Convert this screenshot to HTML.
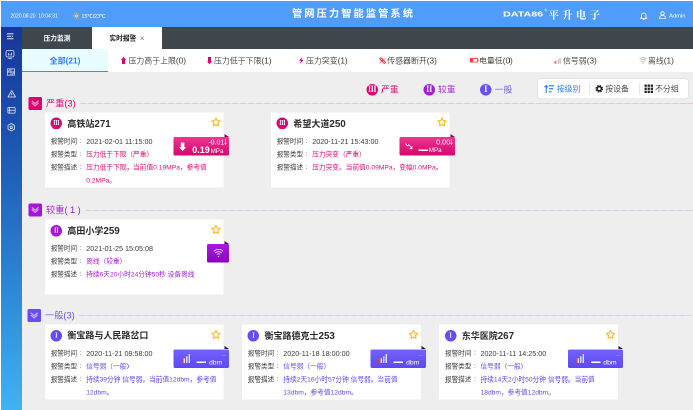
<!DOCTYPE html>
<html lang="zh-CN">
<head>
<meta charset="utf-8">
<title>管网压力智能监管系统</title>
<style>
*{box-sizing:border-box;margin:0;padding:0}
html,body{width:693px;height:410px;overflow:hidden;background:#fff}
body{font-family:"Liberation Sans","Noto Sans CJK SC",sans-serif;color:#333}
#app{position:absolute;left:1px;top:1px;width:1384px;height:818px;transform:scale(.5);transform-origin:0 0;background:#eee;overflow:hidden;will-change:transform}
.abs{position:absolute}
/* header */
#hdr{position:absolute;left:0;top:0;width:1384px;height:51.600px;background:#509cfb;color:#fff}
#hdr .dt{position:absolute;left:19px;top:23px;font-size:10px;line-height:14px;white-space:nowrap}
#hdr .wt{position:absolute;left:161px;font-weight:500;top:23px;font-size:10.600px;line-height:14px;white-space:nowrap}
#hdr .sun{position:absolute;left:143.500px;top:22.500px;width:13.500px;height:13.500px}
#hdr h1{position:absolute;left:582px;top:9px;white-space:nowrap;font-size:20.500px;line-height:32px;font-weight:700;letter-spacing:4.100px}
#hdr .db{position:absolute;left:1004px;top:16px;font-family:"Liberation Sans",sans-serif;font-weight:700;font-size:14.600px;line-height:20px;transform:scaleX(1.47);transform-origin:0 50%;white-space:nowrap}
#hdr .reg{position:absolute;left:1087px;top:15px;font-size:7px;line-height:8px}
#hdr .ps{position:absolute;left:1095px;top:12px;font-family:"Noto Serif CJK SC","Liberation Serif",serif;font-weight:700;font-size:21px;line-height:28px;letter-spacing:6.400px;white-space:nowrap}
#hdr .bell{position:absolute;left:1277.500px;top:20.500px;width:15px;height:17px}
#hdr .usr{position:absolute;left:1316px;top:19.500px;width:14px;height:16.500px}
#hdr .adm{position:absolute;left:1336px;top:22px;font-size:11.600px;line-height:14px}
/* sidebar */
#side{position:absolute;left:0;top:51px;width:42px;height:767px;background:linear-gradient(180deg,#18359c 0%,#1d50ae 27%,#2a80d0 63%,#40b2f2 100%)}
#side svg{position:absolute;opacity:.9}
/* tabs */
#tabs{position:absolute;left:42px;top:51px;width:1342px;height:45px;z-index:0;background:#3f464c}
#tabs .t{position:absolute;top:0;height:45px;line-height:48px;font-size:13.400px;color:#fff;text-align:center;font-weight:700}
#tabs .t.a{background:#fff;color:#222}
#tabs .x{font-weight:400;color:#777;font-size:17px;margin-left:7px;vertical-align:-1px}
#sub{position:absolute;left:42px;top:96px;width:1342px;height:46px;background:#fff;white-space:nowrap}
#sub .s{position:absolute;top:0;height:46px;line-height:46px;font-size:15.800px;color:#3a3a3a;font-weight:350}
#sub .s.a{background:#e9fcff;color:#2f7dfb;font-weight:700;font-size:16px;border-bottom:2.400px solid #3c8cf8;width:172px;text-align:center}
#sub svg{position:absolute}
#sub em{font-style:normal;font-size:16.500px}
/* legend */
.lg{position:absolute;top:166px;height:23px;line-height:23px;font-size:17.600px;white-space:nowrap;font-weight:350}
.lg i{display:inline-block;width:23px;height:23px;border-radius:50%;color:#fff;font-style:normal;font-size:17px;line-height:22px;text-align:center;vertical-align:top;margin-right:6px;font-family:"Liberation Serif","Noto Serif CJK SC",serif;font-weight:700}
#grp{position:absolute;left:1074px;top:156px;width:300px;height:39px;background:#fff;border-radius:5px;box-shadow:0 0 0 1px rgba(0,0,0,.05),0 0 3px rgba(0,0,0,.1)}
#grp .g{position:absolute;top:0;height:39px;line-height:39px;font-size:15.800px;color:#333;white-space:nowrap;font-weight:350}
#grp .g.a{color:#2f7dfb;font-weight:400}
#grp .sep{position:absolute;top:9px;width:1px;height:22px;background:#ccc}
#grp svg{position:absolute}
/* sections */
.sec{position:absolute;left:54px;height:28px}
.sec .ic{position:absolute;left:.5px;top:.8px;width:27.500px;height:26.500px;border-radius:3px;background:currentColor}
.sec .ic svg{position:absolute;left:0;top:0;width:27.500px;height:26.500px}
.sec .tt{position:absolute;left:36px;top:0;line-height:28px;font-size:18.400px;white-space:nowrap;font-weight:350}
.sec .ln{position:absolute;top:13.700px;height:1.800px;background:repeating-linear-gradient(90deg,rgba(var(--c),.2) 0 10px,rgba(var(--c),0) 10px 16px),rgba(var(--c),.22)}
.sec.m{color:#d9066f;--c:217,6,111}.sec.p{color:#a218d6;--c:162,24,214}.sec.i{color:#694bfa;--c:105,75,250}
/* cards */
.card{position:absolute;width:357.500px;height:150px;background:#fff}
.card .lv{position:absolute;left:11.400px;top:10.800px;width:23px;height:23px;border-radius:50%;color:#fff;font-size:12.500px;line-height:23px;text-align:center;font-family:"Liberation Serif","Noto Serif CJK SC",serif;font-weight:700}
.card h3{position:absolute;left:45px;top:8.200px;font-size:18px;line-height:28px;font-weight:700;color:#2a2a2a;white-space:nowrap}
.card h3 em{font-style:normal;font-size:19.600px}
.card .star{position:absolute;left:332.500px;top:9.800px;width:20px;height:20px}
.card .r{position:absolute;left:11.600px;font-size:13.200px;line-height:26px;color:#404040;white-space:nowrap;font-weight:400}
.card .r u{text-decoration:none;position:absolute;left:58px;top:-1px}
.card .r b{font-weight:400;position:absolute;left:71px;top:0;white-space:normal;width:276px;font-size:13.400px}
.card .r b.n{color:#3c3c3c;font-size:14.400px}
.bd{position:absolute;top:49.400px;height:37px;border-radius:3px;color:#fff}
.bd .fold{position:absolute;right:0;top:-6.200px;width:0;height:0;border-left:9.600px solid;border-top:6.200px solid transparent}
.m .lv{background:#d9066f}.m .r b{color:#d90f76}
.p .lv{background:#a218d6}.p .r b{color:#a21cd8}
.i .lv{background:#694bfa}.i .r b{color:#5f49f4}
.m .bd{background:linear-gradient(180deg,#f23390,#d2086e)}.m .fold{color:#8a0f52}
.p .bd{background:linear-gradient(180deg,#a81ae4,#8a00bc)}.p .fold{color:#4a0a6e}
.i .bd{background:linear-gradient(180deg,#7163fb,#5f48f5)}.i .fold{color:#1c1266}
</style>
</head>
<body>
<div id="app">
  <div id="hdr" style="z-index:2">
    <div class="dt">2020.08.20&nbsp; 10:04:31</div>
    <svg class="sun" viewBox="0 0 14 14"><circle cx="7" cy="7" r="3.2" fill="#ffd23a"/><g stroke="#ffd23a" stroke-width="1.3"><path d="M7 0v2.2M7 11.8V14M0 7h2.2M11.8 7H14M2 2l1.6 1.6M10.4 10.4L12 12M2 12l1.6-1.6M10.4 3.6L12 2"/></g></svg>
    <div class="wt">15℃/23℃</div>
    <h1>管网压力智能监管系统</h1>
    <span class="db">DATA86</span><span class="reg">®</span><span class="ps">平升电子</span>
    <svg class="bell" viewBox="0 0 15 17" fill="none" stroke="#fff" stroke-width="1.700"><path d="M3 12V7.500a4.500 4.500 0 0 1 9 0V12l1.500 1.800h-12z"/><path d="M6 16h3"/></svg>
    <svg class="usr" viewBox="0 0 14 16.500" fill="none" stroke="#fff" stroke-width="1.700"><circle cx="7" cy="4.800" r="3.400"/><path d="M1.500 15.500V13c0-2.600 2-4 5.500-4s5.500 1.400 5.500 4v2.500z"/></svg>
    <div class="adm">Admin</div>
  </div>
  <div id="side">
    <svg style="left:11.5px;top:12.9px;width:13px;height:13px" viewBox="0 0 13 13" fill="none" stroke="#fff" stroke-width="1.8"><path d="M0 1.500h13M0 6.500h8M0 11.500h13"/><path d="M9.500 4.500l3 2-3 2z" fill="#fff" stroke="none"/></svg>
    <svg style="left:9.4px;top:47.0px;width:18px;height:18px" viewBox="0 0 18 18" fill="none" stroke="#fff" stroke-width="1.500"><rect x="1" y="1" width="16" height="13" rx="3.500"/><path d="M6 6v5M9 8v3M12 5v6M5.500 17h7"/></svg>
    <svg style="left:12.4px;top:84.4px;width:16px;height:14px" viewBox="0 0 16 14" fill="none" stroke="#fff" stroke-width="1.400"><rect x=".7" y=".7" width="14.600" height="12.600"/><path d="M8 .7v12.600M.7 7h14.600M2.500 5.500l3.500-3.500M10 12l3.500-3.500"/></svg>
    <svg style="left:13.3px;top:126.5px;width:17px;height:15px" viewBox="0 0 17 15" fill="none" stroke="#fff" stroke-width="1.600" stroke-linejoin="round"><path d="M8.500 1.200L1 14h15z"/><path d="M8.500 6v4M8.500 11.300v1.200"/></svg>
    <svg style="left:13.4px;top:161.3px;width:16px;height:13px" viewBox="0 0 16 13" fill="none" stroke="#fff" stroke-width="1.400"><rect x=".7" y=".7" width="14.600" height="11.600" rx="1.500"/><path d="M.7 6.500h14.600M3.500 3.500v0M3.500 9.500h0M3.800 1v11"/></svg>
    <svg style="left:13.3px;top:193.3px;width:15px;height:17px" viewBox="0 0 15 17" fill="none" stroke="#fff" stroke-width="1.500"><path d="M7.500 1l6.500 3.750v7.500L7.500 16 1 12.250v-7.500z"/><circle cx="7.500" cy="8.500" r="2.300"/></svg>
  </div>
  <div id="tabs">
    <div class="t" style="left:0;width:140px">压力监测</div>
    <div class="t a" style="left:140px;width:140px">实时报警<span class="x">×</span></div>
  </div>
  <div id="sub">
    <div class="s a" style="left:0">全部<em>(21)</em></div>
    <svg style="left:198.400px;top:16px" width="10.200" height="14.400" viewBox="0 0 10 14"><path d="M5 0l5 5.600H8V14H2V5.600H0z" fill="#d4006c"/></svg>
    <div class="s" style="left:213px">压力高于上限<em>(0)</em></div>
    <svg style="left:370px;top:16px" width="10.200" height="14.400" viewBox="0 0 10 14"><path d="M5 14l5-5.600H8V0H2v8.400H0z" fill="#d4006c"/></svg>
    <div class="s" style="left:384px">压力低于下限<em>(1)</em></div>
    <svg style="left:554px;top:16px" width="9.200" height="14" viewBox="0 0 9 14"><path d="M6.500 0L0 7.500h3.800L1.500 14 9 5.800H5z" fill="#d4006c"/></svg>
    <div class="s" style="left:568px">压力突变<em>(1)</em></div>
    <svg style="left:714px;top:15.800px" width="14.400" height="14.400" viewBox="0 0 14 14" fill="none" stroke-linecap="round"><path d="M3.500 3.500l7 7" stroke="#e8303c" stroke-width="5.400"/><path d="M3.600 3.600l2 2M8.400 8.400l2 2" stroke="#fff" stroke-width="1.700"/><path d="M1.500 11.500l3-2.500M9.500 5l3-2.500" stroke="#e8303c" stroke-width="1.100"/></svg>
    <div class="s" style="left:730.500px">传感器断开<em>(3)</em></div>
    <svg style="left:895.600px;top:18.200px" width="17.400" height="9.200" viewBox="0 0 17.400 9.200"><rect x=".9" y=".9" width="14" height="7.400" fill="none" stroke="#ff3b3b" stroke-width="1.800"/><rect x=".9" y=".9" width="5" height="7.400" fill="#ff3b3b"/><rect x="15.400" y="2.600" width="2" height="4" fill="#ff3b3b"/></svg>
    <div class="s" style="left:914px">电量低<em>(0)</em></div>
    <svg style="left:1065.400px;top:18.200px" width="12.800" height="11.600" viewBox="0 0 12.800 11.600"><rect x="0" y="6" width="2.600" height="5.600" rx="1" fill="#ff2d2d"/><rect x="3.800" y="4.600" width="2" height="7" fill="#c8c8c8"/><rect x="7" y="2.400" width="2" height="9.200" fill="#bdbdbd"/><rect x="10.200" y="0" width="2" height="11.600" fill="#b0b0b0"/></svg>
    <div class="s" style="left:1082px">信号弱<em>(3)</em></div>
    <svg style="left:1234px;top:16px" width="16.600" height="14.400" viewBox="0 0 16.600 14.400" fill="none" stroke="#8a8a8a" stroke-width="1.100"><path d="M.8 4.200a11 11 0 0 1 15 0M3 7a8 8 0 0 1 10.600 0M5.400 9.700a4.500 4.500 0 0 1 5.800 0"/><circle cx="8.300" cy="12.600" r="1" fill="#8a8a8a" stroke="none"/></svg>
    <div class="s" style="left:1252px">离线<em>(1)</em></div>
  </div>

  <div class="lg" style="left:731.1px;color:#d9066f"><i style="background:#d9066f">Ⅲ</i>严重</div>
  <div class="lg" style="left:844.9px;color:#a01fd6"><i style="background:#a01fd6">Ⅱ</i>较重</div>
  <div class="lg" style="left:958.3px;color:#6a4ff7"><i style="background:#6a4ff7">Ⅰ</i>一般</div>
  <div id="grp">
    <svg style="left:12px;top:10px" width="20" height="19" viewBox="0 0 20 19" fill="none" stroke="#2f7dfb" stroke-width="2.200"><path d="M4.500 18V3M1 6.500L4.500 3 8 6.500"/><path d="M10 3.500h10M10 9.500h8M10 15.500h5" stroke-width="2.600"/></svg>
    <div class="g a" style="left:37.500px">按级别</div>
    <div class="sep" style="left:103px"></div>
    <svg style="left:114px;top:11px" width="17" height="17" viewBox="0 0 17 17"><circle cx="8.500" cy="8.500" r="6.200" fill="none" stroke="#222" stroke-width="3" stroke-dasharray="2.700 2.170"/><circle cx="8.500" cy="8.500" r="4.300" fill="none" stroke="#222" stroke-width="3.200"/></svg>
    <div class="g" style="left:134.500px">按设备</div>
    <div class="sep" style="left:202px"></div>
    <svg style="left:213px;top:11px" width="17" height="17" viewBox="0 0 17 17" fill="#222"><rect x="0" y="0" width="4.600" height="4.600"/><rect x="6.200" y="0" width="4.600" height="4.600"/><rect x="12.400" y="0" width="4.600" height="4.600"/><rect x="0" y="6.200" width="4.600" height="4.600"/><rect x="6.200" y="6.200" width="4.600" height="4.600"/><rect x="12.400" y="6.200" width="4.600" height="4.600"/><rect x="0" y="12.400" width="4.600" height="4.600"/><rect x="6.200" y="12.400" width="4.600" height="4.600"/><rect x="12.400" y="12.400" width="4.600" height="4.600"/></svg>
    <div class="g" style="left:234px">不分组</div>
  </div>

  <!-- section 1 -->
  <div class="sec m" style="top:191px;left:54px">
    <div class="ic"><svg viewBox="0 0 27.500 26.500" fill="none" stroke="#fff" stroke-width="2.600" opacity=".55"><path d="M6.500 7.500l6.800 6 6.800-6"/><path d="M6.500 11.800l6.800 6 6.800-6"/></svg></div>
    <div class="tt">严重(3)</div>
    <div class="ln" style="left:105px;width:1225px"></div>
  </div>
  <div class="card m" style="left:87.8px;top:222.6px">
    <div class="lv">Ⅲ</div><h3>高铁站<em>271</em></h3>
    <svg class="star" viewBox="0 0 18 18" fill="none" stroke="#f9bb28" stroke-width="2" stroke-linejoin="round"><path d="M9 1.600l2.250 4.800 5.150.700-3.750 3.650.900 5.250L9 13.500 4.450 16l.900-5.250L1.600 7.100l5.150-.700z"/></svg>
    <div class="r" style="top:45px">报警时间<u>:</u><b class="n">2021-02-01 11:15:00</b></div>
    <div class="r" style="top:71px">报警类型<u>:</u><b>压力低于下限（严重）</b></div>
    <div class="r" style="top:97px">报警描述<u>:</u><b>压力低于下限。当前值0.19MPa，参考值0.2MPa。</b></div>
    <div class="bd" style="left:257.200px;width:110.600px"><span class="fold"></span>
      <svg class="abs" style="left:10.900px;top:10.600px" width="14.400" height="17" viewBox="0 0 14.400 17"><path d="M7.200 17l7.200-7.600h-3.600V0H3.600v9.400H0z" fill="#fff"/></svg>
      <div class="abs" style="right:9px;top:3px;font-size:14px;line-height:14px;white-space:nowrap">-0.01</div>
      <svg class="abs" style="right:4.500px;top:4px" width="4" height="12" viewBox="0 0 4 12" fill="none" stroke="#fff" stroke-width="1.300"><path d="M2 0v11M.3 8.500L2 11l1.700-2.500"/></svg>
      <div class="abs" style="left:37.600px;top:16.500px;font-size:18px;line-height:20px;font-weight:700;white-space:nowrap">0.19<span style="font-size:12.500px;font-weight:400;margin-left:1.500px">MPa</span></div>
    </div>
  </div>
  <div class="card m" style="left:539.8px;top:222.6px">
    <div class="lv">Ⅲ</div><h3>希望大道<em>250</em></h3>
    <svg class="star" viewBox="0 0 18 18" fill="none" stroke="#f9bb28" stroke-width="2" stroke-linejoin="round"><path d="M9 1.600l2.250 4.800 5.150.700-3.750 3.650.900 5.250L9 13.500 4.450 16l.900-5.250L1.600 7.100l5.150-.700z"/></svg>
    <div class="r" style="top:45px">报警时间<u>:</u><b class="n">2020-11-21 15:43:00</b></div>
    <div class="r" style="top:71px">报警类型<u>:</u><b>压力突变（严重）</b></div>
    <div class="r" style="top:97px">报警描述<u>:</u><b style="width:300px">压力突变。当前值0.09MPa，变幅0.0MPa。</b></div>
    <div class="bd" style="left:257.200px;width:110.600px"><span class="fold"></span>
      <svg class="abs" style="left:11px;top:12.400px" width="16" height="13.400" viewBox="0 0 16 13.400" fill="none" stroke="#fff" stroke-width="1.700"><path d="M.8 1.200l4.200 4.600 2.600-2.400 5.600 6.600"/><path d="M14.600 5.800v6.400H8.400z" fill="#fff" stroke="none"/></svg>
      <div class="abs" style="right:9px;top:3px;font-size:14.600px;line-height:14px;white-space:nowrap">0.00</div>
      <svg class="abs" style="right:4.500px;top:4px" width="4" height="12" viewBox="0 0 4 12" fill="none" stroke="#fff" stroke-width="1.300"><path d="M2 0v11M.3 8.500L2 11l1.700-2.500"/></svg>
      <div class="abs" style="left:37.600px;top:25.500px;width:19.500px;height:2.600px;background:#fff"></div>
      <div class="abs" style="left:58.600px;top:18px;font-size:12.500px;line-height:16px;white-space:nowrap">MPa</div>
    </div>
  </div>
  <!-- section 2 -->
  <div class="sec p" style="top:404px;left:54px">
    <div class="ic"><svg viewBox="0 0 27.500 26.500" fill="none" stroke="#fff" stroke-width="2.600" opacity=".55"><path d="M6.500 7.500l6.800 6 6.800-6"/><path d="M6.500 11.800l6.800 6 6.800-6"/></svg></div>
    <div class="tt">较重( 1 )</div>
    <div class="ln" style="left:116px;width:1214px"></div>
  </div>
  <div class="card p" style="left:87.8px;top:436.8px">
    <div class="lv">Ⅱ</div><h3>高田小学<em>259</em></h3>
    <svg class="star" viewBox="0 0 18 18" fill="none" stroke="#f9bb28" stroke-width="2" stroke-linejoin="round"><path d="M9 1.600l2.250 4.800 5.150.700-3.750 3.650.900 5.250L9 13.500 4.450 16l.900-5.250L1.600 7.100l5.150-.700z"/></svg>
    <div class="r" style="top:45px">报警时间<u>:</u><b class="n">2021-01-25 15:05:08</b></div>
    <div class="r" style="top:71px">报警类型<u>:</u><b>离线（较重）</b></div>
    <div class="r" style="top:97px">报警描述<u>:</u><b>持续6天20小时24分钟50秒 设备离线</b></div>
    <div class="bd" style="left:324px;width:43.800px"><span class="fold"></span>
      <svg class="abs" style="left:11.800px;top:8.600px" width="22" height="18" viewBox="0 0 22 18" fill="none" stroke="#fff" stroke-width="1.600" opacity=".92"><path d="M1.500 5.500a14 14 0 0 1 19 0M4.500 8.800a10 10 0 0 1 13 0M7.500 12a5.600 5.600 0 0 1 7 0"/><circle cx="11" cy="15.800" r="1.500" fill="#fff" stroke="none"/></svg>
    </div>
  </div>
  <!-- section 3 -->
  <div class="sec i" style="top:615px;left:52px">
    <div class="ic"><svg viewBox="0 0 27.500 26.500" fill="none" stroke="#fff" stroke-width="2.600" opacity=".55"><path d="M6.500 7.500l6.800 6 6.800-6"/><path d="M6.500 11.800l6.800 6 6.800-6"/></svg></div>
    <div class="tt">一般(3)</div>
    <div class="ln" style="left:104px;width:1226px"></div>
  </div>
  <div class="card i" style="left:87.8px;top:647.2px">
    <div class="lv">Ⅰ</div><h3>衡宝路与人民路岔口</h3>
    <svg class="star" viewBox="0 0 18 18" fill="none" stroke="#f9bb28" stroke-width="2" stroke-linejoin="round"><path d="M9 1.600l2.250 4.800 5.150.700-3.750 3.650.900 5.250L9 13.500 4.450 16l.900-5.250L1.600 7.100l5.150-.700z"/></svg>
    <div class="r" style="top:45px">报警时间<u>:</u><b class="n">2020-11-21 09:58:00</b></div>
    <div class="r" style="top:71px">报警类型<u>:</u><b>信号弱（一般）</b></div>
    <div class="r" style="top:97px">报警描述<u>:</u><b>持续39分钟 信号弱。当前值12dbm，参考值12dbm。</b></div>
    <div class="bd" style="left:257.200px;width:110.600px"><span class="fold"></span>
      <svg class="abs" style="left:14.800px;top:9px" width="18.500" height="18" viewBox="0 0 18.500 18"><rect x="0" y="11" width="3.400" height="7" rx="1" fill="#ff2a3c"/><rect x="5.200" y="8.500" width="2.800" height="9.500" fill="#e4e0ff"/><rect x="10.200" y="4.500" width="2.800" height="13.500" fill="#e4e0ff"/><rect x="15.200" y="0" width="2.800" height="18" fill="#e4e0ff"/></svg>
      <div class="abs" style="right:5px;top:5px;font-size:11px;line-height:12px;opacity:.6;letter-spacing:1px">--</div>
      <div class="abs" style="left:46.200px;top:24.900px;width:19px;height:2.400px;background:#fff"></div>
      <div class="abs" style="left:71px;top:18.400px;font-size:13.700px;line-height:16px;white-space:nowrap">dbm</div>
    </div>
  </div>
  <div class="card i" style="left:482.0px;top:647.2px">
    <div class="lv">Ⅰ</div><h3>衡宝路德克士<em>253</em></h3>
    <svg class="star" viewBox="0 0 18 18" fill="none" stroke="#f9bb28" stroke-width="2" stroke-linejoin="round"><path d="M9 1.600l2.250 4.800 5.150.700-3.750 3.650.900 5.250L9 13.500 4.450 16l.900-5.250L1.600 7.100l5.150-.700z"/></svg>
    <div class="r" style="top:45px">报警时间<u>:</u><b class="n">2020-11-18 18:00:00</b></div>
    <div class="r" style="top:71px">报警类型<u>:</u><b>信号弱（一般）</b></div>
    <div class="r" style="top:97px">报警描述<u>:</u><b>持续2天16小时57分钟 信号弱。当前值13dbm，参考值12dbm。</b></div>
    <div class="bd" style="left:257.200px;width:110.600px"><span class="fold"></span>
      <svg class="abs" style="left:14.800px;top:9px" width="18.500" height="18" viewBox="0 0 18.500 18"><rect x="0" y="11" width="3.400" height="7" rx="1" fill="#ff2a3c"/><rect x="5.200" y="8.500" width="2.800" height="9.500" fill="#e4e0ff"/><rect x="10.200" y="4.500" width="2.800" height="13.500" fill="#e4e0ff"/><rect x="15.200" y="0" width="2.800" height="18" fill="#e4e0ff"/></svg>
      <div class="abs" style="right:5px;top:5px;font-size:11px;line-height:12px;opacity:.6;letter-spacing:1px">--</div>
      <div class="abs" style="left:46.200px;top:24.900px;width:19px;height:2.400px;background:#fff"></div>
      <div class="abs" style="left:71px;top:18.400px;font-size:13.700px;line-height:16px;white-space:nowrap">dbm</div>
    </div>
  </div>
  <div class="card i" style="left:876.4px;top:647.2px">
    <div class="lv">Ⅰ</div><h3>东华医院<em>267</em></h3>
    <svg class="star" viewBox="0 0 18 18" fill="none" stroke="#f9bb28" stroke-width="2" stroke-linejoin="round"><path d="M9 1.600l2.250 4.800 5.150.700-3.750 3.650.900 5.250L9 13.500 4.450 16l.900-5.250L1.600 7.100l5.150-.700z"/></svg>
    <div class="r" style="top:45px">报警时间<u>:</u><b class="n">2020-11-11 14:25:00</b></div>
    <div class="r" style="top:71px">报警类型<u>:</u><b>信号弱（一般）</b></div>
    <div class="r" style="top:97px">报警描述<u>:</u><b>持续14天2小时50分钟 信号弱。当前值18dbm，参考值12dbm。</b></div>
    <div class="bd" style="left:257.200px;width:110.600px"><span class="fold"></span>
      <svg class="abs" style="left:14.800px;top:9px" width="18.500" height="18" viewBox="0 0 18.500 18"><rect x="0" y="11" width="3.400" height="7" rx="1" fill="#ff2a3c"/><rect x="5.200" y="8.500" width="2.800" height="9.500" fill="#e4e0ff"/><rect x="10.200" y="4.500" width="2.800" height="13.500" fill="#e4e0ff"/><rect x="15.200" y="0" width="2.800" height="18" fill="#e4e0ff"/></svg>
      <div class="abs" style="right:5px;top:5px;font-size:11px;line-height:12px;opacity:.6;letter-spacing:1px">--</div>
      <div class="abs" style="left:46.200px;top:24.900px;width:19px;height:2.400px;background:#fff"></div>
      <div class="abs" style="left:71px;top:18.400px;font-size:13.700px;line-height:16px;white-space:nowrap">dbm</div>
    </div>
  </div>
</div>
</body>
</html>
